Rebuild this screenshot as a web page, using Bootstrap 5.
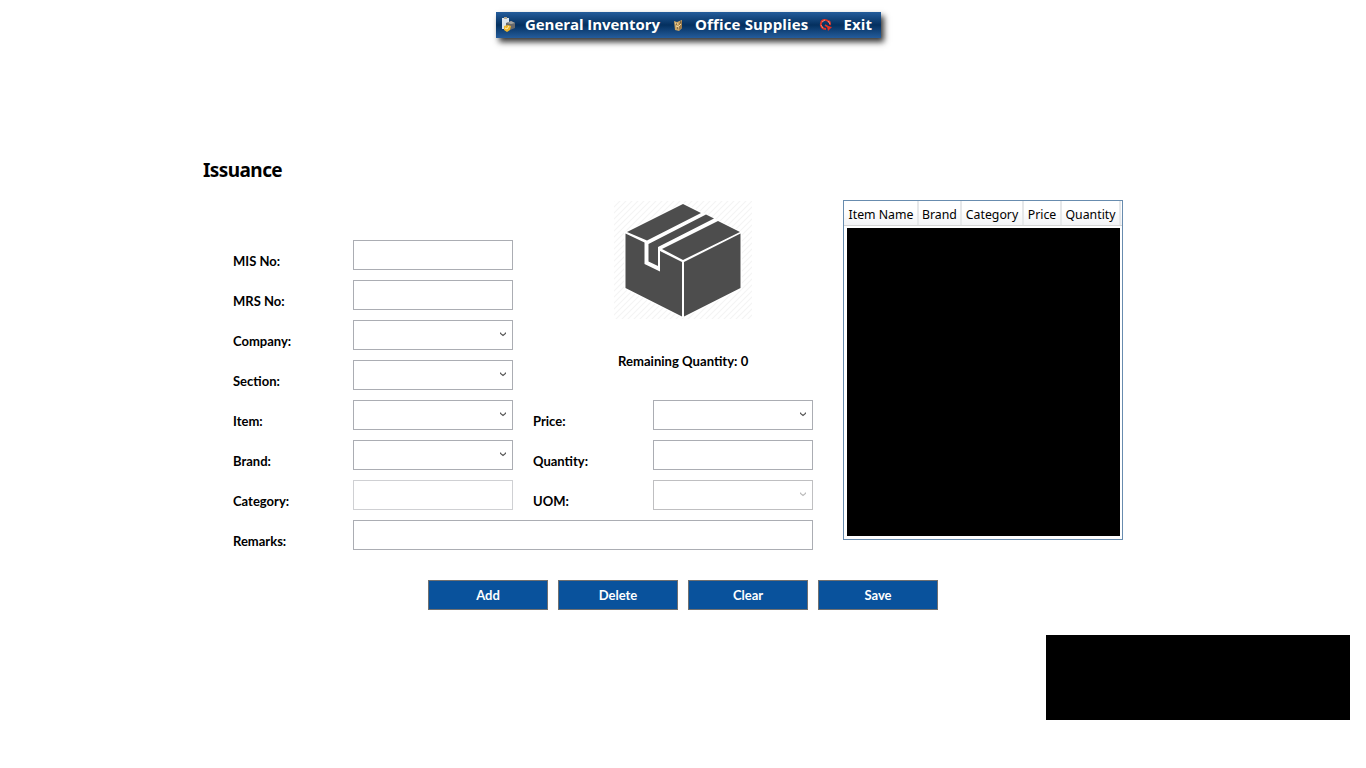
<!DOCTYPE html>
<html lang="en">
<head>
<meta charset="utf-8">
<title>Issuance</title>
<meta name="viewport" content="width=device-width, initial-scale=1">
<link href="https://cdn.jsdelivr.net/npm/bootstrap@5.3.0/dist/css/bootstrap.min.css" rel="stylesheet">
<style>
body{background:#fff;color:#000;height:768px;overflow:hidden;font-family:"Open Sans","Noto Sans",sans-serif}
.topmenu{width:385px;height:26px;margin:12px 0 0 496px;padding:0 7px 0 5px;background:linear-gradient(#245c9b,#04305f 50%,#245c9b);box-shadow:3px 4px 6px rgba(0,0,0,.8)}
.topmenu a{color:#fff;font-weight:700;font-size:15px;line-height:24px;height:26px;text-decoration:none;white-space:nowrap}
.topmenu svg{flex:none}
.t1{margin-left:9px;letter-spacing:-.06px}.i2{margin-left:12px}.t2{margin-left:12px;letter-spacing:.15px}.i3{margin-left:11px}.t3{margin-left:10px;letter-spacing:.1px}
.title-text{font:700 19px/26px "Noto Sans",sans-serif;margin:119px 0 0 203px;letter-spacing:-.57px}
.work{margin:17px 0 0 233px;gap:30px}
.entry{display:grid;grid-template-columns:120px 160px 20px 120px 160px;grid-template-rows:repeat(9,30px);row-gap:10px;width:580px;flex:none}
.c4{grid-column:4}.c5{grid-column:5}.wide{grid-column:2/6}
.entry label{font:700 13px/20px Lato,sans-serif;padding-top:11px;grid-column:1;white-space:nowrap}
.entry label.c4{grid-column:4}
.stock{grid-column:4/6;grid-row:1/6;padding:1px 0 0 81px}
.stock p{font:700 13.1px/20px Lato,sans-serif;margin:32px 0 0 4px;white-space:nowrap}
.entry .form-control{border:1px solid #abadb3;border-radius:0;height:30px;padding:0 6px;background:#fff}
.entry .form-control:disabled{border-color:#cfd0d3}
.entry .pick{display:flex;justify-content:flex-end;padding:11px 6px 0}
.pick.off{border-color:#bfbfc1!important}
.grid-box{width:280px;height:340px;border:1px solid #688caf;flex:none;background:#fff}
.heads{height:25px;padding-left:1px;background:linear-gradient(#fff 40%,#f2f3f5);border-bottom:1px solid #d5d5d5}
.heads span{font:12.3px/28px "Noto Sans",sans-serif;border-right:2px solid #e6e8ea;text-align:center;flex:none;white-space:nowrap;height:24px}
.rows{background:#000;margin:2px 2px 3px 3px;height:308px}
.acts{margin:30px 0 0 428px;gap:10px}
.acts .btn{width:120px;height:30px;padding:0;border:1px solid #707070;border-radius:0;background:#09529c;color:#fff;font:700 13px/28px Lato,sans-serif}
.cover{width:304px;height:85px;background:#000;margin:25px 0 0 1046px}
</style>
</head>
<body>
<nav class="topmenu d-flex align-items-center">
  <svg width="15" height="16" viewBox="0 0 15 16"><path d="M1 1h7v11H1z" fill="#dce5ec"/><path d="M3 0h3v2H3z" fill="#b5aa92"/><path d="M5 6l5-2 4 2v5l-5 2-4-3z" fill="#66686b"/><path d="M6 6l4-2 4 2-4 1z" fill="#a5a5a2"/><path d="M3 9l4-1 3 1-1 4-3 2-3-2z" fill="#eeb52c"/><path d="M4 11l2 1 2-3" stroke="#fff0ae" fill="none"/></svg>
  <a href="#" class="t1">General Inventory</a>
  <svg width="11" height="14" viewBox="0 0 11 14" class="i2"><path d="M2 3l3 1 5-2v8l-3 3-4-1z" fill="#c9a464"/><path d="M7 5l3-2v7l-3 2z" fill="#9c7b4b"/><path d="M3 5l3 1M4 8l3 1M7 8l2-2" stroke="#f0d8a6"/><path d="M4 6h1M5 10h1M8 4h1" stroke="#463b2b"/></svg>
  <a href="#" class="t2">Office Supplies</a>
  <svg width="14" height="14" viewBox="0 0 14 14" class="i3"><path d="M10 4C8 1 3 1 2 5c-1 3 1 6 5 6M10 3c1 1 1.500 2 1 4M6 7l5 3" fill="none" stroke="#df3526" stroke-width="1.900"/><path d="M8 8l5 1-4 4z" fill="#e33122"/><path d="M3 4l3-2M2 7l2 3M9 3l2 3" stroke="#ff998a" stroke-width=".8"/></svg>
  <a href="#" class="t3">Exit</a>
</nav>
<h1 class="title-text">Issuance</h1>
<main class="work d-flex">
  <form class="entry">
    <div class="stock">
      <svg class="d-block" width="138" height="118" viewBox="0 0 138 118">
        <defs><pattern id="hatch" width="6" height="6" patternUnits="userSpaceOnUse"><path d="M-1 7L7-1M-1 1L1-1M5 7L7 5" stroke="#f4f4f4" stroke-width="1.2"/></pattern></defs>
        <path fill="url(#hatch)" d="M0 0h138v118H0z"/>
        <path fill="#fff" d="M69 2L128 31v57L69 117 10 88V31z"/>
        <path fill="#4d4d4d" d="M69 3L87 12 33 39.500 13 31zM92 13.500L100 17.500 44 46V65L34.500 60.500V43zM104 20L126 31 69 59 48 48zM11.500 32.500L30.500 41.500V63L46 70.500V50L68 61V115.500L11.500 87zM70 61L126.500 32.500V87L70 115.500z"/>
      </svg>
      <p>Remaining Quantity: 0</p>
    </div>
    <label style="grid-row:2">MIS No:</label><input class="form-control" style="grid-row:2;grid-column:2">
    <label style="grid-row:3">MRS No:</label><input class="form-control" style="grid-row:3;grid-column:2">
    <label style="grid-row:4">Company:</label><div class="form-control pick" style="grid-row:4;grid-column:2"><svg width="6" height="5" viewBox="0 0 6 5"><path d="M.5 .5v1L3 3.500 5.500 1.500v-1" fill="none" stroke="#555" stroke-width="1.200"/></svg></div>
    <label style="grid-row:5">Section:</label><div class="form-control pick" style="grid-row:5;grid-column:2"><svg width="6" height="5" viewBox="0 0 6 5"><path d="M.5 .5v1L3 3.500 5.500 1.500v-1" fill="none" stroke="#555" stroke-width="1.200"/></svg></div>
    <label style="grid-row:6">Item:</label><div class="form-control pick" style="grid-row:6;grid-column:2"><svg width="6" height="5" viewBox="0 0 6 5"><path d="M.5 .5v1L3 3.500 5.500 1.500v-1" fill="none" stroke="#555" stroke-width="1.200"/></svg></div>
    <label class="c4" style="grid-row:6">Price:</label><div class="form-control pick c5" style="grid-row:6"><svg width="6" height="5" viewBox="0 0 6 5"><path d="M.5 .5v1L3 3.500 5.500 1.500v-1" fill="none" stroke="#555" stroke-width="1.200"/></svg></div>
    <label style="grid-row:7">Brand:</label><div class="form-control pick" style="grid-row:7;grid-column:2"><svg width="6" height="5" viewBox="0 0 6 5"><path d="M.5 .5v1L3 3.500 5.500 1.500v-1" fill="none" stroke="#555" stroke-width="1.200"/></svg></div>
    <label class="c4" style="grid-row:7">Quantity:</label><input class="form-control c5" style="grid-row:7">
    <label style="grid-row:8">Category:</label><input class="form-control" disabled style="grid-row:8;grid-column:2">
    <label class="c4" style="grid-row:8">UOM:</label><div class="form-control pick off c5" style="grid-row:8"><svg width="6" height="5" viewBox="0 0 6 5"><path d="M.5 .5v1L3 3.500 5.500 1.500v-1" fill="none" stroke="#bbb" stroke-width="1.200"/></svg></div>
    <label style="grid-row:9">Remarks:</label><input class="form-control wide" style="grid-row:9">
  </form>
  <section class="grid-box">
    <div class="heads d-flex"><span style="width:74px">Item Name</span><span style="width:43px">Brand</span><span style="width:62px">Category</span><span style="width:38px">Price</span><span style="width:59px">Quantity</span></div>
    <div class="rows"></div>
  </section>
</main>
<div class="acts d-flex"><button class="btn">Add</button><button class="btn">Delete</button><button class="btn">Clear</button><button class="btn">Save</button></div>
<div class="cover"></div>
<script src="https://cdn.jsdelivr.net/npm/bootstrap@5.3.0/dist/js/bootstrap.bundle.min.js"></script>
</body>
</html>
